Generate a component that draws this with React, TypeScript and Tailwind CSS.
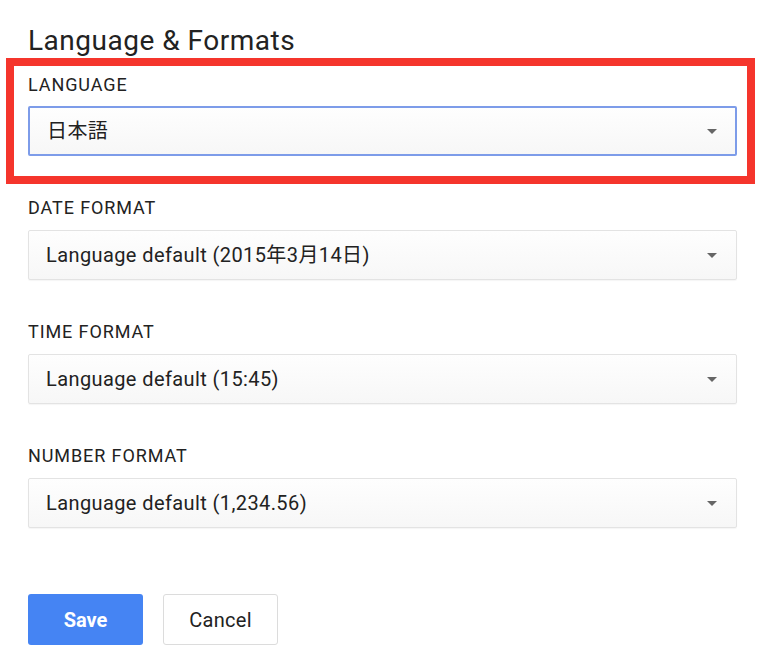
import React from 'react';

// Settings panel: language & formats
const font = { fontFamily: 'Roboto, "Noto Sans CJK JP", sans-serif' };

const Arrow: React.FC = () => (
  <svg width="10" height="5" viewBox="0 0 10 5" className="shrink-0">
    <path d="M0 0h10L5 5z" fill="#666" />
  </svg>
);

const Select: React.FC<{ value: string; focused?: boolean }> = ({ value, focused }) => (
  <div
    className={
      'h-[50px] flex items-center justify-between rounded-[2px] bg-gradient-to-b from-[#fefefe] to-[#f7f7f7] ' +
      (focused ? 'border-2 border-[#7d9ce9] pl-[17px] pr-[18px]' : 'border border-[#e3e3e3] pl-[17px] pr-[19px] shadow-[0_1px_1px_rgba(0,0,0,0.04)]')
    }
  >
    <span className="text-[20px] tracking-[0.4px] text-[#222] leading-none">{value}</span>
    <Arrow />
  </div>
);

const Field: React.FC<{ label: string; value: string; focused?: boolean }> = ({ label, value, focused }) => (
  <div>
    <div className={'text-[18px] leading-none text-[#222] tracking-[0.9px] ' + (focused ? 'mb-[12px]' : 'mb-[13px]')}>{label}</div>
    <Select value={value} focused={focused} />
  </div>
);

const App: React.FC = () => {
  return (
    <div className="w-[768px] h-[670px] bg-white overflow-hidden" style={font}>
      <div className="pl-[28px] pr-[31px] pt-[27px]">
        <h1 className="text-[28px] tracking-[0.5px] leading-none text-[#222] font-normal">Language &amp; Formats</h1>

        {/* highlighted field */}
        <div className="mt-[3px] -ml-[22px] -mr-[18px] border-8 border-[#f5352c] pl-[14px] pr-[10px] pt-[10px] pb-[20px]">
          <Field label="LANGUAGE" value="日本語" focused />
        </div>

        <div className="mt-[15px] flex flex-col gap-[43px]">
          <Field label="DATE FORMAT" value="Language default (2015年3月14日)" />
          <Field label="TIME FORMAT" value="Language default (15:45)" />
          <Field label="NUMBER FORMAT" value="Language default (1,234.56)" />
        </div>

        <div className="mt-[66px] flex gap-[20px]">
          <button className="w-[115px] h-[51px] rounded-[3px] bg-[#4584f3] text-white text-[20px] font-bold">Save</button>
          <button className="w-[115px] h-[51px] rounded-[3px] bg-white border border-[#dcdcdc] text-[#222] text-[20px] tracking-[0.3px]">Cancel</button>
        </div>
      </div>
    </div>
  );
};

export default App;
